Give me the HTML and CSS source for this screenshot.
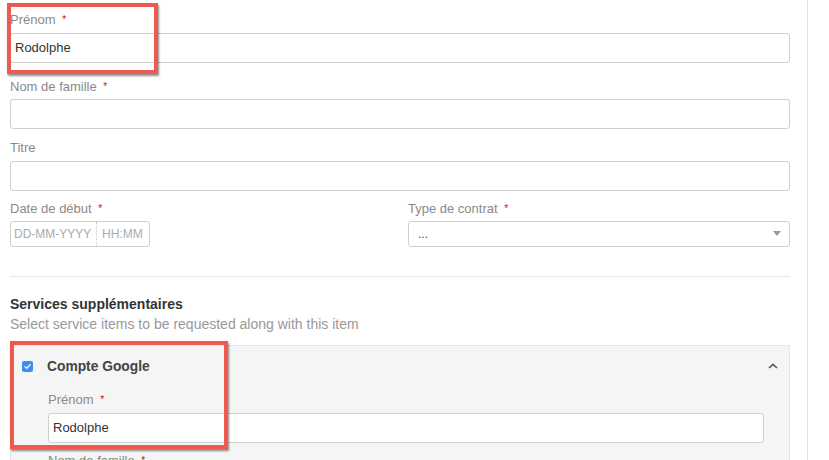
FILE: index.html
```html
<!DOCTYPE html>
<html lang="fr">
<head>
<meta charset="utf-8">
<link rel="stylesheet" href="styles.css">
</head>
<body>
<div class="page">
  <div class="field f1">
    <label class="lbl">Prénom <span class="req">*</span></label>
    <div class="input">Rodolphe</div>
  </div>
  <div class="field f2">
    <label class="lbl">Nom de famille <span class="req">*</span></label>
    <div class="input"></div>
  </div>
  <div class="field f3">
    <label class="lbl">Titre</label>
    <div class="input"></div>
  </div>
  <div class="row">
    <div class="field">
      <label class="lbl">Date de début <span class="req">*</span></label>
      <div class="dt">
        <span class="dt-date">DD-MM-YYYY</span>
        <span class="dt-time">HH:MM</span>
      </div>
    </div>
    <div class="field">
      <label class="lbl">Type de contrat <span class="req">*</span></label>
      <div class="select">
        <span>...</span>
        <svg class="caret" width="8" height="5" viewBox="0 0 8 5"><path d="M0 0 L8 0 L4 5 Z" fill="#999"/></svg>
      </div>
    </div>
  </div>
  <hr class="sep">
  <h3 class="sect">Services supplémentaires</h3>
  <p class="sub">Select service items to be requested along with this item</p>
  <div class="panel">
    <div class="panel-head">
      <span class="cb"><svg width="11" height="11" viewBox="0 0 11 11"><path d="M3 5.6 L4.8 7.4 L8.2 3.6" fill="none" stroke="#fff" stroke-width="1.3" stroke-linecap="round" stroke-linejoin="round"/></svg></span>
      <span class="ptitle">Compte Google</span>
      <svg class="chev" width="10" height="6" viewBox="0 0 10 6"><path d="M1 5 L5 1.3 L9 5" fill="none" stroke="#555" stroke-width="1.6"/></svg>
    </div>
    <div class="panel-body">
      <div class="field pf">
        <label class="lbl">Prénom <span class="req">*</span></label>
        <div class="input">Rodolphe</div>
      </div>
      <div class="field">
        <label class="lbl">Nom de famille <span class="req">*</span></label>
        <div class="input"></div>
      </div>
    </div>
  </div>
  <div class="hl hl1"></div>
  <div class="hl hl2"></div>
</div>
</body>
</html>
```
FILE: styles.css
```css
* { box-sizing: border-box; }
html, body { margin: 0; padding: 0; background: #fff; }
html { overflow: hidden; }
body {
  font-family: "Liberation Sans", Arial, Helvetica, sans-serif;
  width: 829px; height: 460px; overflow: hidden;
}
.page {
  position: relative;
  width: 808px;
  height: 460px;
  overflow: hidden;
  padding: 12px 17px 0 10px;
  border-right: 1px solid #e2e2e2;
}
.field { display: flex; flex-direction: column; }
.lbl {
  font-size: 13px; line-height: 16px; color: #8a8a8a;
  margin-bottom: 5px;
}
.req { color: #d0021b; font-size: 10px; margin-left: 3px; vertical-align: 1px; }
.input {
  height: 30px; border: 1px solid #cfcfcf; border-radius: 3px; background: #fff;
  font-size: 13px; color: #333; line-height: 28px; padding: 0 4px;
}
.f1 { margin-bottom: 16px; }
.f2 { margin-bottom: 11px; }
.f3 { margin-bottom: 10px; }
.f2 .lbl { margin-bottom: 4px; }
.f3 .lbl { margin-bottom: 5px; }
.row { display: grid; grid-template-columns: 1fr 1fr; gap: 16px; }
.row .lbl { margin-bottom: 4px; }
.dt {
  width: 140px; height: 26px; border: 1px solid #cfcfcf; border-radius: 3px;
  display: flex; font-size: 12px; color: #ababab; line-height: 24px;
}
.dt-date { width: 86px; padding-left: 3px; border-right: 1px dotted #ccc; }
.dt-time { padding-left: 5px; }
.select {
  height: 26px; border: 1px solid #cfcfcf; border-radius: 3px;
  display: flex; align-items: center; justify-content: space-between;
  padding: 0 8px 0 9px; font-size: 12px; color: #444;
}
.caret { margin-top: -2px; }
.sep { border: 0; border-top: 1px solid #e8e8e8; margin: 29px 0 0; }
.sect {
  margin: 18px 0 0; font-size: 14px; line-height: 18px; font-weight: bold; color: #333;
}
.sub { margin: 2px 0 0; font-size: 14px; line-height: 18px; color: #999; }
.panel {
  margin-top: 12px; background: #f5f5f5; border: 1px solid #e6e6e6; border-bottom: 0;
  height: 130px;
}
.panel-head {
  display: flex; align-items: center; height: 41px; padding: 0 11px 0 11px;
}
.cb {
  width: 11px; height: 11px; border-radius: 2px; background: #3c8ff0;
  display: inline-flex;
}
.ptitle { margin-left: 14px; font-size: 13.8px; font-weight: bold; color: #444; flex: 1; }
.chev { margin-top: -2px; }
.panel-body { padding: 5px 25px 0 37px; }
.pf { margin-bottom: 10px; }
.pf .lbl { margin-bottom: 5px; }
.hl {
  position: absolute; border: 4px solid #ef5a50;
  box-shadow: 1px 2px 2px rgba(0,0,0,0.45);
}
.hl1 { left: 7px; top: 3px; width: 151px; height: 71px; }
.hl2 { left: 10px; top: 341px; width: 218px; height: 108px; }
```
